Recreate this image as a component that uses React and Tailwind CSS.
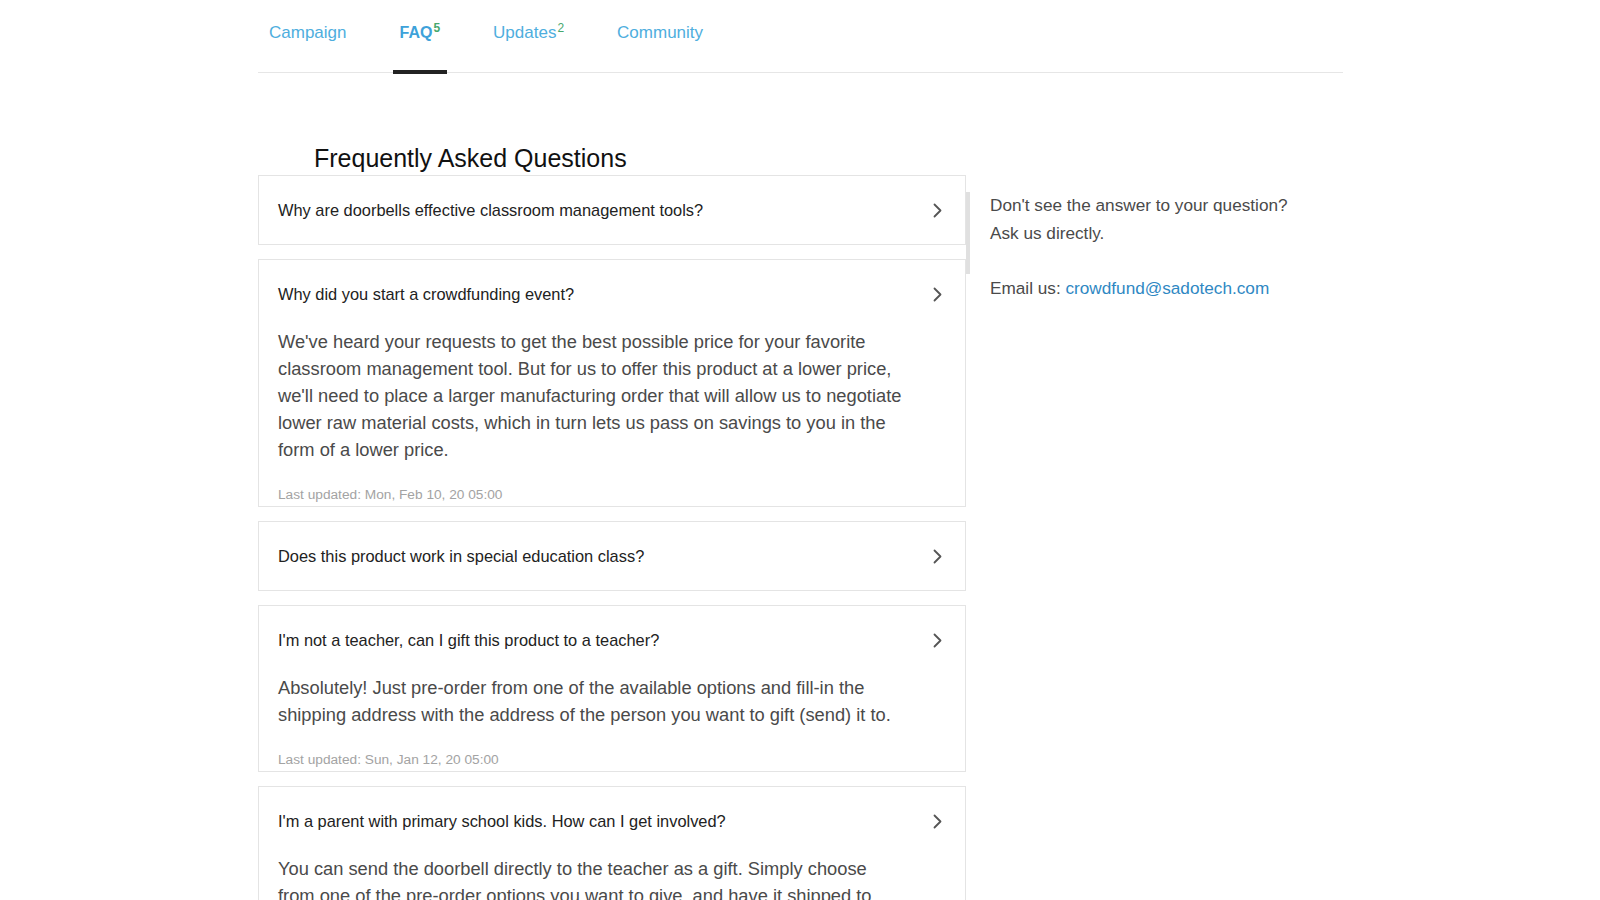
import React from "react";

const faqs = [
  { q: "Why are doorbells effective classroom management tools?" },
  {
    q: "Why did you start a crowdfunding event?",
    a: [
      "We've heard your requests to get the best possible price for your favorite",
      "classroom management tool. But for us to offer this product at a lower price,",
      "we'll need to place a larger manufacturing order that will allow us to negotiate",
      "lower raw material costs, which in turn lets us pass on savings to you in the",
      "form of a lower price.",
    ],
    updated: "Last updated: Mon, Feb 10, 20 05:00",
  },
  { q: "Does this product work in special education class?" },
  {
    q: "I'm not a teacher, can I gift this product to a teacher?",
    a: [
      "Absolutely! Just pre-order from one of the available options and fill-in the",
      "shipping address with the address of the person you want to gift (send) it to.",
    ],
    updated: "Last updated: Sun, Jan 12, 20 05:00",
  },
  {
    q: "I'm a parent with primary school kids. How can I get involved?",
    a: [
      "You can send the doorbell directly to the teacher as a gift. Simply choose",
      "from one of the pre-order options you want to give, and have it shipped to",
      "the teacher's school address.",
    ],
    updated: "Last updated: Sun, Jan 12, 20 05:00",
  },
];

function Chevron() {
  return (
    <svg width="11" height="15" viewBox="0 0 11 15" className="shrink-0">
      <path d="M2.5 1.5 L8.5 7.5 L2.5 13.5" fill="none" stroke="#555" strokeWidth="1.8" strokeLinecap="round" strokeLinejoin="round" />
    </svg>
  );
}

function Card({ q, a, updated }) {
  return (
    <div
      className="border border-[#e4e4e4] bg-white pl-[19px] pr-[22px] pt-[24px] pb-[24px] data-[open=true]:pb-[3px]"
      data-open={a ? "true" : "false"}
    >
      <div className="flex items-center justify-between h-[20px]">
        <span className="text-[16.4px] leading-[20px] text-[#222]">{q}</span>
        <Chevron />
      </div>
      {a && (
        <>
          <p className="mt-[24px] text-[18.3px] leading-[27px] text-[#4a4a4a] whitespace-nowrap">
            {a.map((line, i) => (
              <React.Fragment key={i}>
                {line}
                {i < a.length - 1 && <br />}
              </React.Fragment>
            ))}
          </p>
          <div className="mt-[24px] text-[13.7px] leading-[16px] text-[#a3a3a3]">{updated}</div>
        </>
      )}
    </div>
  );
}

export default function App() {
  return (
    <div className="min-h-[900px] h-[900px] bg-white overflow-hidden" style={{ fontFamily: '"Liberation Sans", Arial, sans-serif' }}>
      <div className="ml-[258px] w-[1085px]">
        <nav className="flex h-[73px] border-b border-[#e6e6e6] pl-[4px] gap-[39px]">
          {[
            { label: "Campaign" },
            { label: "FAQ", sup: "5", active: true },
            { label: "Updates", sup: "2" },
            { label: "Community" },
          ].map((t) => (
            <div
              key={t.label}
              className={
                "relative flex items-start pt-[21px] px-[7px] h-[73px] leading-[24px] " +
                (t.active ? "text-[16px] font-bold text-[#3ea2da]" : "text-[17px] text-[#4eaede]")
              }
            >
              <span>
                {t.label}
                {t.sup && (
                  <sup className={"text-[12px] text-[#47a86e] ml-[1px] " + (t.active ? "font-bold" : "font-normal")}>{t.sup}</sup>
                )}
              </span>
              {t.active && <div className="absolute left-0 right-0 bottom-[-1px] h-[4px] bg-[#222]" />}
            </div>
          ))}
        </nav>

        <div className="flex mt-[71px]">
          <div className="w-[708px] shrink-0">
            <h2 className="ml-[56px] text-[25px] leading-[28px] text-[#111] mb-[3px]">Frequently Asked Questions</h2>
            <div className="relative flex flex-col gap-[14px]">
              {faqs.map((f) => (
                <Card key={f.q} {...f} />
              ))}
              <div className="absolute right-[-4px] top-[17px] w-[4px] h-[82px] bg-[#e0e0e0]" />
            </div>
          </div>
          <div className="ml-[24px] pt-[48px] text-[17.2px] leading-[27.5px] text-[#4a4a4a]">
            <p>Don't see the answer to your question?</p>
            <p>Ask us directly.</p>
            <p className="mt-[28px]">
              Email us: <span className="text-[#2f88c3]">crowdfund@sadotech.com</span>
            </p>
          </div>
        </div>
      </div>
    </div>
  );
}
